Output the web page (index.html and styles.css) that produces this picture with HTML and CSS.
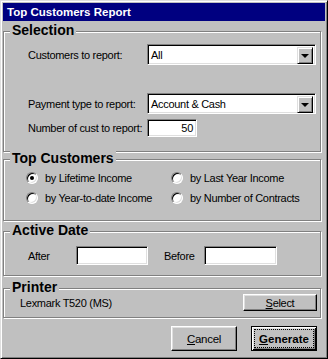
FILE: index.html
```html
<!DOCTYPE html>
<html lang="en">
<head>
  <meta charset="UTF-8">
  <title>Top Customers Report</title>
<link rel="stylesheet" href="styles.css">
</head>
<body>
<div class="window">
	<div class="titlebar">Top Customers Report</div>

	<div class="group group-selection">
		<span class="legend">Selection</span>
		<div class="field-row row-customers">
			<span class="field-label">Customers to report:</span>
			<div class="combo"><span class="combo-value">All</span><span class="combo-btn"></span></div>
		</div>
		<div class="field-row row-payment">
			<span class="field-label">Payment type to report:</span>
			<div class="combo"><span class="combo-value">Account &amp; Cash</span><span class="combo-btn"></span></div>
		</div>
		<div class="field-row row-count">
			<span class="field-label">Number of cust to report:</span>
			<div class="textbox count">50</div>
		</div>
	</div>

	<div class="group group-top">
		<span class="legend">Top Customers</span>
		<div class="radios">
			<div class="radio-item"><span class="radio checked"></span>by Lifetime Income</div>
			<div class="radio-item"><span class="radio"></span>by Last Year Income</div>
			<div class="radio-item"><span class="radio"></span>by Year-to-date Income</div>
			<div class="radio-item"><span class="radio"></span>by Number of Contracts</div>
		</div>
	</div>

	<div class="group group-date">
		<span class="legend">Active Date</span>
		<div class="date-row">
			<span class="date-label after">After</span>
			<div class="textbox date-after"></div>
			<span class="date-label before">Before</span>
			<div class="textbox date-before"></div>
		</div>
	</div>

	<div class="group group-printer">
		<span class="legend">Printer</span>
		<div class="printer-row">
			<span>Lexmark T520 (MS)</span>
			<span class="button small"><u>S</u>elect</span>
		</div>
	</div>

	<div class="actions">
		<span class="button"><u>C</u>ancel</span>
		<span class="button default"><span class="focus"><u>G</u>enerate</span></span>
	</div>
</div>
</body>
</html>
```

FILE: styles.css
```css
* {
	margin: 0;
	padding: 0;
	box-sizing: border-box;
}
html, body {
	background: #c0c0c0;
}
body {
	font: normal 11px "Liberation Sans", Arial, sans-serif;
	letter-spacing: -0.3px;
	color: #000;
}

.window {
	width: 328px;
	height: 359px;
	padding: 2px;
	border: 1px solid;
	border-color: #dfdfdf #000 #000 #dfdfdf;
	box-shadow: inset 1px 1px #fff, inset -1px -1px #808080;
}

.titlebar {
	height: 18px;
	padding-left: 4px;
	background: #000080;
	color: #fff;
	font-weight: bold;
	font-size: 11.5px;
	letter-spacing: 0;
	line-height: 18px;
}

/* etched group boxes */
.group {
	position: relative;
	width: 318px;
	border: 1px solid #808080;
	box-shadow: 1px 1px #fff, inset 1px 1px #fff;
}
.legend {
	position: absolute;
	top: -10px;
	left: 6px;
	padding: 0 2px;
	background: #c0c0c0;
	font-weight: bold;
	font-size: 14px;
	letter-spacing: 0;
	line-height: 16px;
}

.group-selection {
	margin-top: 10px;
	height: 121px;
	padding: 12px 0 0 24px;
}
.group-top {
	margin-top: 7px;
	height: 62px;
	padding: 8px 0 0 22px;
}
.group-date {
	margin-top: 10px;
	height: 45px;
	padding: 14px 0 0 24px;
}
.group-printer {
	margin-top: 12px;
	height: 30px;
	padding: 5px 3px 0 16px;
}

/* selection rows */
.field-row {
	display: flex;
	align-items: center;
}
.field-label {
	width: 119px;
}
.row-payment { margin-top: 28px; }
.row-count { margin-top: 5px; }

.combo, .textbox {
	background: #fff;
	border: 1px solid;
	border-color: #808080 #fff #fff #808080;
	box-shadow: inset 1px 1px #000, inset -1px -1px #dfdfdf;
}
.combo {
	display: flex;
	width: 169px;
	height: 21px;
	padding: 2px;
}
.combo-value {
	flex: 1;
	padding-left: 1px;
	line-height: 17px;
}
.combo-btn {
	position: relative;
	width: 16px;
	height: 17px;
	background: #c0c0c0;
	border: 1px solid;
	border-color: #dfdfdf #000 #000 #dfdfdf;
	box-shadow: inset 1px 1px #fff, inset -1px -1px #808080;
}
.combo-btn::after {
	content: "";
	position: absolute;
	left: 3px;
	top: 6px;
	border-left: 4px solid transparent;
	border-right: 4px solid transparent;
	border-top: 4px solid #000;
}

.textbox {
	height: 19px;
	padding: 0 3px;
	line-height: 17px;
}
.count {
	width: 50px;
	height: 18px;
	line-height: 16px;
	text-align: right;
}

/* radios */
.radios {
	display: grid;
	grid-template-columns: 145px 145px;
	grid-auto-rows: 20px;
}
.radio-item {
	display: flex;
	align-items: center;
}
.radio {
	position: relative;
	width: 12px;
	height: 12px;
	margin-right: 7px;
	border-radius: 50%;
	background: #fff;
	border: 1px solid;
	border-color: #808080 #fff #fff #808080;
	box-shadow: inset 1px 1px #000, inset -1px -1px #dfdfdf;
}
.radio.checked::after {
	content: "";
	position: absolute;
	left: 3px;
	top: 3px;
	width: 4px;
	height: 4px;
	border-radius: 50%;
	background: #000;
}

/* active date */
.date-row {
	display: flex;
	align-items: center;
}
.date-label.after { width: 48px; }
.date-label.before { width: 40px; margin-left: 16px; }
.date-after { width: 72px; }
.date-before { width: 73px; }

/* printer */
.printer-row {
	display: flex;
	align-items: center;
	justify-content: space-between;
}

/* buttons */
.button {
	display: flex;
	align-items: center;
	justify-content: center;
	width: 66px;
	height: 25px;
	font-size: 11.5px;
	border: 1px solid;
	border-color: #fff #000 #000 #fff;
	box-shadow: inset -1px -1px #808080, inset 1px 1px #dfdfdf;
}
.button.small {
	width: 74px;
	height: 17px;
	font-size: 11px;
}
.actions {
	display: flex;
	justify-content: flex-end;
	gap: 14px;
	margin-top: 8px;
	padding-right: 8px;
}
.button.default {
	border-color: #000;
	box-shadow: inset 1px 1px #fff, inset -1px -1px #000, inset 2px 2px #dfdfdf, inset -2px -2px #808080;
	font-weight: bold;
	letter-spacing: 0;
}
.focus {
	display: flex;
	align-items: center;
	justify-content: center;
	width: 58px;
	height: 17px;
	outline: 1px dotted #000;
}
```
